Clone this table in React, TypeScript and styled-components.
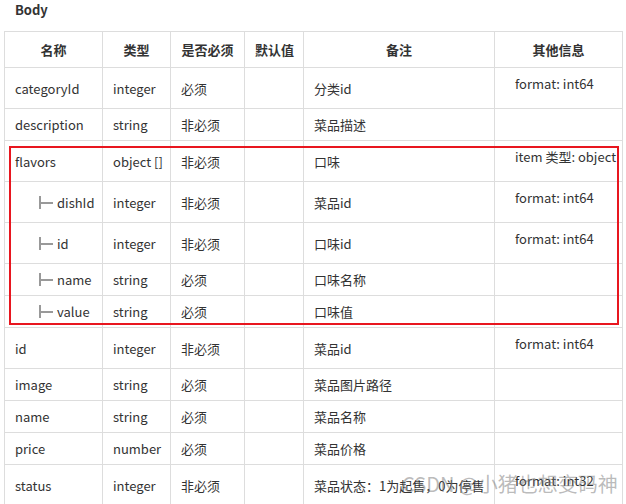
import styled, { createGlobalStyle } from 'styled-components'
import { FC } from 'react'

const GlobalStyle = createGlobalStyle`
  html, body {
    margin: 0;
    padding: 0;
    background: #fff;
  }
  body {
    font-family: 'Noto Sans CJK SC', sans-serif;
    color: #333;
  }
`

type Field = {
  name: string
  type: string
  required: boolean
  note: string
  info?: string
  child?: boolean
}

const fields: Field[] = [
  { name: 'categoryId', type: 'integer', required: true, note: '分类id', info: 'format: int64' },
  { name: 'description', type: 'string', required: false, note: '菜品描述' },
  { name: 'flavors', type: 'object []', required: false, note: '口味', info: 'item 类型: object' },
  { name: 'dishId', type: 'integer', required: false, note: '菜品id', info: 'format: int64', child: true },
  { name: 'id', type: 'integer', required: false, note: '口味id', info: 'format: int64', child: true },
  { name: 'name', type: 'string', required: true, note: '口味名称', child: true },
  { name: 'value', type: 'string', required: true, note: '口味值', child: true },
  { name: 'id', type: 'integer', required: false, note: '菜品id', info: 'format: int64' },
  { name: 'image', type: 'string', required: true, note: '菜品图片路径' },
  { name: 'name', type: 'string', required: true, note: '菜品名称' },
  { name: 'price', type: 'number', required: true, note: '菜品价格' },
  { name: 'status', type: 'integer', required: false, note: '菜品状态：1为起售，0为停售', info: 'format: int32' },
]

const Page = styled.div`
  position: relative;
  padding: 0 0 0 4px;
  height: 504px;
  overflow: hidden;
`

const Title = styled.h4`
  margin: 0;
  padding: 1px 0 0 11px;
  height: 30px;
  font-size: 13px;
  line-height: 18px;
  font-weight: 700;
  color: #333;
`

const Table = styled.table`
  width: 619px;
  border-collapse: collapse;
  table-layout: fixed;
  font-size: 13px;
  line-height: 19px;
`

const HeadCell = styled.th`
  border: 1px solid #ddd;
  padding: 8px 10px;
  font-weight: 700;
  text-align: center;
  white-space: nowrap;
  color: #333;
`

const Cell = styled.td`
  border: 1px solid #ddd;
  padding: 6px 10px;
  vertical-align: middle;
  white-space: nowrap;
  color: #333;
`

const InfoCell = styled.td`
  border: 1px solid #ddd;
  padding: 6px 10px;
  vertical-align: top;
  white-space: nowrap;
  color: #333;
`

const Info = styled.div`
  padding: 0 0 9px 10px;
`

// the "├─" tree connector in front of nested fields
const TreeMark = styled.span`
  position: relative;
  display: inline-block;
  vertical-align: -1px;
  width: 14px;
  height: 13px;
  margin: 0 4px 0 24px;
  box-sizing: border-box;
  border-left: 2px solid #999;

  &::after {
    content: '';
    position: absolute;
    left: 0;
    right: 0;
    top: 6px;
    height: 2px;
    background: #999;
  }
`

const Highlight = styled.div`
  position: absolute;
  left: 9px;
  top: 146px;
  width: 606px;
  height: 175px;
  border: 2px solid #e8161f;
  pointer-events: none;
`

const Watermark = styled.div`
  position: absolute;
  left: 402px;
  top: 470px;
  font-size: 20px;
  line-height: 28px;
  color: rgba(120, 120, 120, 0.5);
  white-space: nowrap;
  pointer-events: none;
`

const Row: FC<{ field: Field }> = ({ field }) => (
  <tr>
    <Cell>
      {field.child && <TreeMark />}
      {field.name}
    </Cell>
    <Cell>{field.type}</Cell>
    <Cell>{field.required ? '必须' : '非必须'}</Cell>
    <Cell />
    <Cell>{field.note}</Cell>
    <InfoCell>{field.info && <Info>{field.info}</Info>}</InfoCell>
  </tr>
)

export default function App() {
  return (
    <Page>
      <GlobalStyle />
      <Title>Body</Title>
      <Table>
        <colgroup>
          <col style={{ width: 98 }} />
          <col style={{ width: 68 }} />
          <col style={{ width: 74 }} />
          <col style={{ width: 59 }} />
          <col style={{ width: 191 }} />
          <col />
        </colgroup>
        <thead>
          <tr>
            <HeadCell>名称</HeadCell>
            <HeadCell>类型</HeadCell>
            <HeadCell>是否必须</HeadCell>
            <HeadCell>默认值</HeadCell>
            <HeadCell>备注</HeadCell>
            <HeadCell>其他信息</HeadCell>
          </tr>
        </thead>
        <tbody>
          {fields.map((f, i) => (
            <Row key={i} field={f} />
          ))}
        </tbody>
      </Table>
      <Highlight />
      <Watermark>CSDN @小猪也想变码神</Watermark>
    </Page>
  )
}
